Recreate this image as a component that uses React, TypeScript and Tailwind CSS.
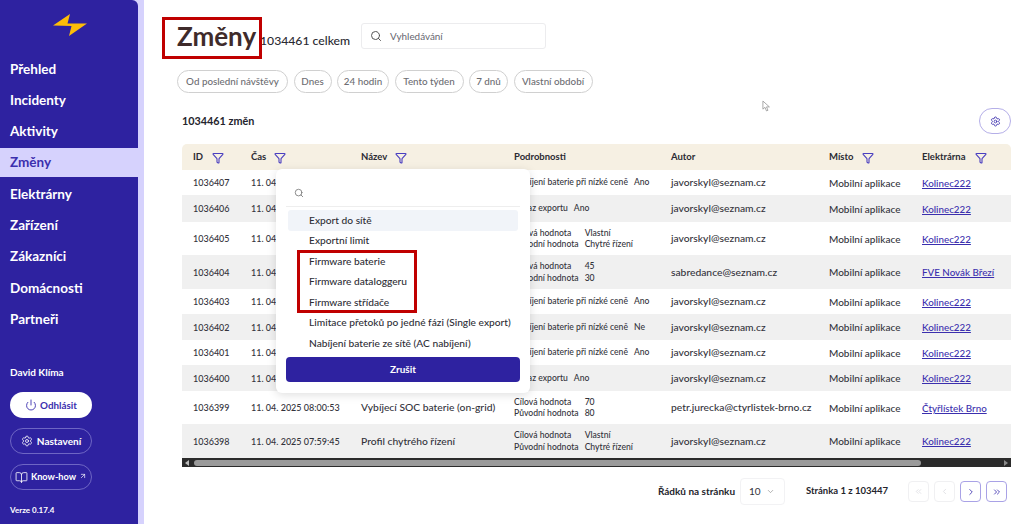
import React from "react";
import { Search, Power, Settings, BookOpen, ArrowUpRight, ChevronDown, ChevronLeft, ChevronRight, ChevronsLeft, ChevronsRight, Funnel } from "lucide-react";

const font = "font-['Lato','Noto_Sans',sans-serif]";

const nav = ["Přehled", "Incidenty", "Aktivity", "Změny", "Elektrárny", "Zařízení", "Zákazníci", "Domácnosti", "Partneři"];
const chips = [
  { t: "Od poslední návštěvy", w: "w-[111px]" },
  { t: "Dnes", w: "w-[38px]" },
  { t: "24 hodin", w: "w-[52px]" },
  { t: "Tento týden", w: "w-[69px]" },
  { t: "7 dnů", w: "w-[39px]" },
  { t: "Vlastní období", w: "w-[79px]" },
];
const mail = "javorskyl@seznam.cz";
const app = "Mobilní aplikace";
const kol = "Kolinec222";

type Row = { id: string; t: string; n: string; d: [string, string][]; a: string; e: string; h: string };
const rows: Row[] = [
  { id: "1036407", t: "11. 04", n: "", d: [["Nabíjení baterie při nízké ceně", "Ano"]], a: mail, e: kol, h: "h-[25px]" },
  { id: "1036406", t: "11. 04", n: "", d: [["Zákaz exportu", "Ano"]], a: mail, e: kol, h: "h-[27px]" },
  { id: "1036405", t: "11. 04", n: "", d: [["Cílová hodnota", "Vlastní"], ["Původní hodnota", "Chytré řízení"]], a: mail, e: kol, h: "h-[33px]" },
  { id: "1036404", t: "11. 04", n: "", d: [["Cílová hodnota", "45"], ["Původní hodnota", "30"]], a: "sabredance@seznam.cz", e: "FVE Novák Březí", h: "h-[34px]" },
  { id: "1036403", t: "11. 04", n: "", d: [["Nabíjení baterie při nízké ceně", "Ano"]], a: mail, e: kol, h: "h-[25px]" },
  { id: "1036402", t: "11. 04", n: "", d: [["Nabíjení baterie při nízké ceně", "Ne"]], a: mail, e: kol, h: "h-[26px]" },
  { id: "1036401", t: "11. 04", n: "", d: [["Nabíjení baterie při nízké ceně", "Ano"]], a: mail, e: kol, h: "h-[25px]" },
  { id: "1036400", t: "11. 04", n: "", d: [["Zákaz exportu", "Ano"]], a: mail, e: kol, h: "h-[26px]" },
  { id: "1036399", t: "11. 04. 2025 08:00:53", n: "Vybíjecí SOC baterie (on-grid)", d: [["Cílová hodnota", "70"], ["Původní hodnota", "80"]], a: "petr.jurecka@ctyrlistek-brno.cz", e: "Čtyřlístek Brno", h: "h-[33px]" },
  { id: "1036398", t: "11. 04. 2025 07:59:45", n: "Profil chytrého řízení", d: [["Cílová hodnota", "Vlastní"], ["Původní hodnota", "Chytré řízení"]], a: mail, e: kol, h: "h-[34px]" },
];

const cols = "grid grid-cols-[58px_110px_153px_157px_158px_93px_100px]";

function Head({ label, filter, gap }: { label: string; filter?: boolean; gap?: string }) {
  return (
    <div className={`flex items-center pt-[1px] pl-[11px] ${gap ?? ""}`}>
      <span className="text-[9.5px] font-bold text-[#2b2b33]">{label}</span>
      {filter && <Funnel className="h-[12px] w-[12px] text-[#4a3fc0]" strokeWidth={2.2} />}
    </div>
  );
}

function Side() {
  return (
    <aside className="flex h-[524px] w-[144px] shrink-0 bg-[#d6d2fd]">
      <div className="flex h-full w-[138px] flex-col rounded-tr-[6px] bg-[#2e22a0] text-white">
        <div className="flex h-[53px] items-start justify-center pt-[13px]">
          <svg width="36" height="24" viewBox="0 0 36 24" className="-mr-[2px]">
            <path d="M1 12.5 L18 1 L15.5 10.5 L35 10.5 L17 23 L19.5 13 Z" fill="#fdbd08" />
          </svg>
        </div>
        <nav className="flex flex-col">
          {nav.map((n) => (
            <div
              key={n}
              className={
                n === "Změny"
                  ? "mt-[1px] mb-[1.3px] flex h-[29px] items-center bg-[#d6d2fd] pl-[10px] text-[13.5px] font-bold text-[#3b2fae]"
                  : "flex h-[31.3px] items-center pl-[10px] text-[13.5px] font-bold"
              }
            >
              {n}
            </div>
          ))}
        </nav>
        <div className="mt-auto flex flex-col pb-[8px] pl-[10px]">
          <div className="mb-[12px] text-[10px] font-bold">David Klíma</div>
          <div className="flex h-[26px] w-[82px] items-center justify-center gap-[3px] rounded-full bg-white text-[9.8px] font-bold text-[#3b2fae]">
            <Power className="h-[12px] w-[12px]" strokeWidth={1.8} />
            Odhlásit
          </div>
          <div className="mt-[10px] flex h-[26px] w-[82px] items-center justify-center gap-[4px] rounded-full border border-[#6e66c4] text-[10px] font-bold">
            <Settings className="h-[12px] w-[12px]" strokeWidth={1.6} />
            Nastavení
          </div>
          <div className="mt-[10px] flex h-[26px] w-[82px] items-center justify-center gap-[3px] rounded-full border border-[#6e66c4] text-[9.2px] font-bold">
            <BookOpen className="h-[13px] w-[13px]" strokeWidth={1.5} />
            Know-how
            <ArrowUpRight className="-mt-[3px] h-[8px] w-[8px]" strokeWidth={2} />
          </div>
          <div className="mt-[14px] text-[8px] font-bold">Verze 0.17.4</div>
        </div>
      </div>
    </aside>
  );
}

function Dropdown() {
  const items = ["Export do sítě", "Exportní limit", "Firmware baterie", "Firmware dataloggeru", "Firmware střídače", "Limitace přetoků po jedné fázi (Single export)", "Nabíjení baterie ze sítě (AC nabíjení)"];
  return (
    <div className="absolute left-[132px] top-[169px] z-10 h-[224px] w-[254px] rounded-[6px] bg-white px-[10px] shadow-[0_2px_10px_rgba(0,0,0,0.13)]">
      <div className="flex h-[38px] items-center border-b border-[#eeeeee] pl-[8px]">
        <Search className="mt-[10px] h-[10px] w-[10px] text-[#777777]" />
      </div>
      <div className="mt-[3px] flex flex-col px-[2px]">
        {items.map((t, i) => (
          <div key={t} className={`flex h-[20.5px] items-center rounded-[3px] pl-[21px] text-[10.2px] font-medium whitespace-nowrap text-[#2e2e36] ${i === 0 ? "bg-[#f1f4f9]" : ""}`}>
            {t}
          </div>
        ))}
      </div>
      <div className="mt-[3px] flex h-[25px] w-[234px] items-center justify-center rounded-[4px] bg-[#2e22a0] text-[10px] font-bold text-white">Zrušit</div>
    </div>
  );
}

function Table() {
  return (
    <div className="w-[829px] overflow-hidden">
      <div className={`${cols} h-[26px] rounded-t-[5px] bg-[#f6f0e3]`}>
        <Head label="ID" filter gap="gap-[9px]" />
        <Head label="Čas" filter gap="gap-[8px]" />
        <Head label="Název" filter gap="gap-[8px]" />
        <Head label="Podrobnosti" />
        <Head label="Autor" />
        <Head label="Místo" filter gap="gap-[9px]" />
        <Head label="Elektrárna" filter gap="gap-[9px]" />
      </div>
      {rows.map((r, i) => (
        <div key={r.id} className={`${cols} ${r.h} items-center pt-[1px] font-medium text-[#33333b] ${i % 2 ? "bg-[#f0f0f0]" : "bg-white"}`}>
          <div className="pl-[11px] text-[9px]">{r.id}</div>
          <div className="pl-[11px] text-[9px] whitespace-nowrap">{r.t}</div>
          <div className="pl-[11px] text-[10.3px] whitespace-nowrap">{r.n}</div>
          <div className="grid w-fit grid-cols-[auto_auto] gap-x-[6px] pl-[11px] text-[8.6px] leading-[11.5px] whitespace-nowrap">
            {r.d.map(([a, b]) => (
              <React.Fragment key={a}>
                <span>{a}</span>
                <span>{b}</span>
              </React.Fragment>
            ))}
          </div>
          <div className="pl-[11px] text-[10.3px] whitespace-nowrap">{r.a}</div>
          <div className="pl-[11px] text-[10px] whitespace-nowrap">{app}</div>
          <div className="pl-[11px] text-[9.8px] whitespace-nowrap text-[#3b2fae] underline">{r.e}</div>
        </div>
      ))}
      <div className="flex h-[9px] items-center bg-[#2b2b2b] px-[3px]">
        <span className="h-0 w-0 border-y-[3px] border-r-[4px] border-y-transparent border-r-[#bbbbbb]" />
        <div className="ml-[5px] h-[6px] w-[727px] rounded-full bg-[#9a9a9a]" />
        <span className="ml-auto h-0 w-0 border-y-[3px] border-l-[4px] border-y-transparent border-l-[#8a8a8a]" />
      </div>
    </div>
  );
}

function Pager() {
  const off = "flex h-[21px] w-[21px] items-center justify-center rounded-[4px] border border-[#f0f0f2] text-[#d8d8de]";
  const on = "flex h-[21px] w-[21px] items-center justify-center rounded-[4px] border border-[#a9a2e6] text-[#3b2fae]";
  return (
    <div className="mt-[11px] flex w-[829px] items-center justify-end pr-[4px]">
      <span className="text-[10px] font-bold text-[#24242c]">Řádků na stránku</span>
      <div className="ml-[5px] flex h-[27px] w-[45px] items-center justify-between rounded-[4px] border border-[#f2f2f4] pr-[9px] pl-[8px] text-[10px] text-[#33333b]">
        10
        <ChevronDown className="h-[9px] w-[9px] text-[#999999]" />
      </div>
      <span className="ml-[21px] text-[9.5px] font-bold text-[#24242c]">Stránka 1 z 103447</span>
      <div className="ml-[20px] flex gap-[5px]">
        <div className={off}><ChevronsLeft className="h-[9px] w-[9px]" /></div>
        <div className={off}><ChevronLeft className="h-[9px] w-[9px]" /></div>
        <div className={on}><ChevronRight className="h-[10px] w-[10px]" /></div>
        <div className={on}><ChevronsRight className="h-[10px] w-[10px]" /></div>
      </div>
    </div>
  );
}

export default function App() {
  return (
    <div className={`${font} relative flex h-[524px] w-[1024px] overflow-hidden bg-white`}>
      <Side />
      <main className="relative min-w-0 flex-1 pl-[38px]">
        <div className="flex h-[70px] items-start">
          <h1 className="mt-[20px] ml-[-5px] w-[83px] text-[26px] leading-[32px] font-bold text-[#3f2b2b]">Změny</h1>
          <span className="mt-[33px] w-[101px] text-[12.2px] leading-[15px] font-medium text-[#2a2a32]">1034461 celkem</span>
          <div className="mt-[23px] flex h-[26px] w-[185px] items-center gap-[8px] rounded-[3px] border border-[#ececee] pl-[8px]">
            <Search className="h-[12px] w-[12px] text-[#555555]" />
            <span className="text-[9.9px] text-[#666670]">Vyhledávání</span>
          </div>
        </div>
        <div className="-ml-[5px] flex h-[23px] gap-[5.5px]">
          {chips.map((c) => (
            <div key={c.t} className={`${c.w} flex h-[23px] items-center justify-center rounded-full border border-[#d0d0d0] text-[9.8px] font-medium whitespace-nowrap text-[#6d6d72]`}>
              {c.t}
            </div>
          ))}
        </div>
        <div className="mt-[15px] flex h-[26px] w-[829px] items-center justify-between">
          <span className="text-[10.8px] font-bold text-[#24242c]">1034461 změn</span>
          <div className="flex h-[26px] w-[32px] items-center justify-center rounded-full border border-[#b5afe8]">
            <Settings className="h-[11px] w-[11px] text-[#3b2fae]" strokeWidth={1.8} />
          </div>
        </div>
        <div className="mt-[10px]">
          <Table />
        </div>
        <Pager />
        <svg viewBox="0 0 10 13" className="absolute left-[618px] top-[100px] h-[12px] w-[9px]">
          <path d="M1 1 L1 10 L3.3 8 L5 12 L6.6 11.3 L5 7.5 L8.2 7.5 Z" fill="white" stroke="#8a8a8a" strokeWidth="0.8" />
        </svg>
        <Dropdown />
      </main>
      <div className="pointer-events-none absolute left-[162px] top-[17px] z-20 h-[42px] w-[100px] border-[3px] border-[#c00000]" />
      <div className="pointer-events-none absolute left-[297px] top-[250px] z-20 h-[63px] w-[120px] border-[3px] border-[#c00000]" />
    </div>
  );
}
